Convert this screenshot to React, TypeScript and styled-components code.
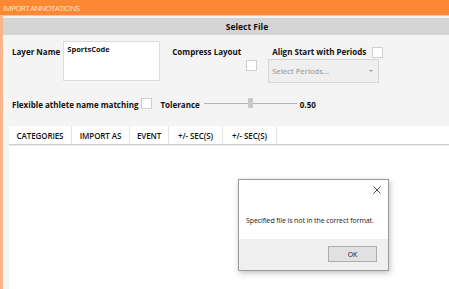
import React from 'react';
import styled, { createGlobalStyle } from 'styled-components';

const GlobalStyle = createGlobalStyle`
  html, body {
    margin: 0;
    padding: 0;
    background: #ffffff;
  }
  body {
    font-family: "Open Sans", "Noto Sans", sans-serif;
    color: #111;
  }
`;

const Window = styled.div`
  position: relative;
  width: 449px;
  height: 289px;
  display: flex;
  flex-direction: column;
  overflow: hidden;
`;

const TitleBar = styled.div`
  height: 15px;
  line-height: 15px;
  background: #fd8833;
  color: #fde4d0;
  font-size: 8px;
  padding-left: 3px;
  border-bottom: 1px solid #fbc59c;
  letter-spacing: -0.65px;
`;

const Body = styled.div`
  flex: 1;
  display: flex;
  flex-direction: column;
  background: #f4f4f4;
  border-left: 3px solid #f9b68a;
  padding-top: 2px;
`;

const SectionHeader = styled.div`
  height: 17px;
  line-height: 17px;
  background: #d4d4d4;
  text-align: center;
  font-weight: 700;
  font-size: 8.5px;
  padding-left: 42px;
`;

const Row = styled.div<{ $top: number; $height: number }>`
  display: flex;
  align-items: flex-start;
  margin-top: ${(p) => p.$top}px;
  height: ${(p) => p.$height}px;
  padding-left: 9px;
`;

const Label = styled.span<{ $mt?: number; $ml?: number }>`
  font-size: 8px;
  font-weight: 700;
  white-space: nowrap;
  margin-top: ${(p) => p.$mt ?? 0}px;
  margin-left: ${(p) => p.$ml ?? 0}px;
  line-height: 11px;
`;

const TextArea = styled.div`
  width: 97px;
  height: 40px;
  margin-left: 3px;
  background: #fff;
  border: 1px solid #dcdcdc;
  font-size: 7.5px;
  font-weight: 700;
  padding: 2px 3px;
  box-sizing: border-box;
  line-height: 11px;
`;

const Check = styled.span<{ $mt?: number; $ml?: number }>`
  display: inline-block;
  width: 11px;
  height: 11px;
  box-sizing: border-box;
  background: #fff;
  border: 1px solid #d0d0d0;
  margin-top: ${(p) => p.$mt ?? 0}px;
  margin-left: ${(p) => p.$ml ?? 0}px;
  flex-shrink: 0;
`;

const Column = styled.div<{ $ml: number }>`
  display: flex;
  flex-direction: column;
  margin-left: ${(p) => p.$ml}px;
`;

const AlignRow = styled.div`
  display: flex;
  align-items: flex-start;
  padding-left: 4px;
`;

const SelectBox = styled.div`
  margin-top: 1px;
  width: 111px;
  height: 24px;
  box-sizing: border-box;
  background: #efefef;
  border: 1px solid #d6d6d6;
  display: flex;
  align-items: center;
  justify-content: space-between;
  padding: 0 5px 0 3px;
  font-size: 7.5px;
  font-weight: 600;
  color: #a5a5a5;
`;

const Arrow = styled.span`
  width: 0;
  height: 0;
  border-left: 2px solid transparent;
  border-right: 2px solid transparent;
  border-top: 2px solid #9a9a9a;
`;

const Slider = styled.div`
  position: relative;
  width: 93px;
  height: 11px;
  margin-left: 4px;
  display: flex;
  align-items: center;
`;

const Track = styled.div`
  width: 100%;
  height: 1px;
  background: #b5b5b5;
`;

const Thumb = styled.div`
  position: absolute;
  left: 44px;
  top: 0;
  width: 5px;
  height: 10px;
  background: #c9c9c9;
  border-radius: 1px;
`;

const Grid = styled.div`
  flex: 1;
  margin-left: 6px;
  margin-top: 15px;
  background: #fff;
  display: flex;
  flex-direction: column;
`;

const GridHeader = styled.div`
  display: flex;
  height: 18px;
  border-bottom: 1px solid #cfcfcf;
  box-shadow: 0 1px 0 #e8e8e8;
`;

const HeaderCell = styled.div<{ $w: number }>`
  width: ${(p) => p.$w}px;
  box-sizing: border-box;
  border-right: 1px solid #e3e3e3;
  font-size: 8px;
  font-weight: 600;
  display: flex;
  align-items: center;
  justify-content: center;
  white-space: nowrap;
  color: #111;
  letter-spacing: -0.1px;
`;

const Dialog = styled.div`
  position: absolute;
  left: 238px;
  top: 179px;
  width: 151px;
  height: 92px;
  box-sizing: border-box;
  background: #fff;
  border: 1px solid #9a9a9a;
  box-shadow: 1px 2px 6px rgba(0, 0, 0, 0.25);
  display: flex;
  flex-direction: column;
`;

const DialogTop = styled.div`
  height: 59px;
  position: relative;
  display: flex;
  align-items: flex-end;
  padding: 0 0 14px 7px;
  box-sizing: border-box;
  font-size: 7px;
  letter-spacing: -0.1px;
  color: #222;
`;

const Close = styled.svg`
  position: absolute;
  right: 7px;
  top: 6px;
`;

const DialogFooter = styled.div`
  flex: 1;
  background: #f0f0f0;
  display: flex;
  justify-content: flex-end;
  align-items: flex-start;
  padding: 7px 11px 0 0;
`;

const OkButton = styled.div`
  width: 49px;
  height: 16px;
  box-sizing: border-box;
  background: #e1e1e1;
  border: 1px solid #adadad;
  font-size: 7px;
  display: flex;
  align-items: center;
  justify-content: center;
  color: #111;
`;

const columns = [
  { label: 'CATEGORIES', w: 63 },
  { label: 'IMPORT AS', w: 58 },
  { label: 'EVENT', w: 39 },
  { label: '+/- SEC(S)', w: 54 },
  { label: '+/- SEC(S)', w: 54 },
];

function App() {
  return (
    <>
      <GlobalStyle />
      <Window>
        <TitleBar>IMPORT ANNOTATIONS</TitleBar>
        <Body>
          <SectionHeader>Select File</SectionHeader>
          <Row $top={6} $height={42}>
            <Label $mt={5}>Layer Name</Label>
            <TextArea>SportsCode</TextArea>
            <Label $mt={5} $ml={12}>Compress Layout</Label>
            <Check $mt={19} $ml={5} />
            <Column $ml={11}>
              <AlignRow>
                <Label $mt={5}>Align Start with Periods</Label>
                <Check $mt={6} $ml={6} />
              </AlignRow>
              <SelectBox>
                Select Periods...
                <Arrow />
              </SelectBox>
            </Column>
          </Row>
          <Row $top={15} $height={13}>
            <Label $mt={1}>Flexible athlete name matching</Label>
            <Check $ml={3} />
            <Label $mt={1} $ml={8}>Tolerance</Label>
            <Slider>
              <Track />
              <Thumb />
            </Slider>
            <Label $mt={1} $ml={3}>0.50</Label>
          </Row>
          <Grid>
            <GridHeader>
              {columns.map((c, i) => (
                <HeaderCell key={i} $w={c.w}>{c.label}</HeaderCell>
              ))}
            </GridHeader>
          </Grid>
        </Body>
        <Dialog>
          <DialogTop>
            Specified file is not in the correct format.
            <Close width="8" height="8" viewBox="0 0 8 8">
              <path d="M0.5 0.5 L7.5 7.5 M7.5 0.5 L0.5 7.5" stroke="#333" strokeWidth="0.9" fill="none" />
            </Close>
          </DialogTop>
          <DialogFooter>
            <OkButton>OK</OkButton>
          </DialogFooter>
        </Dialog>
      </Window>
    </>
  );
}

export default App;
